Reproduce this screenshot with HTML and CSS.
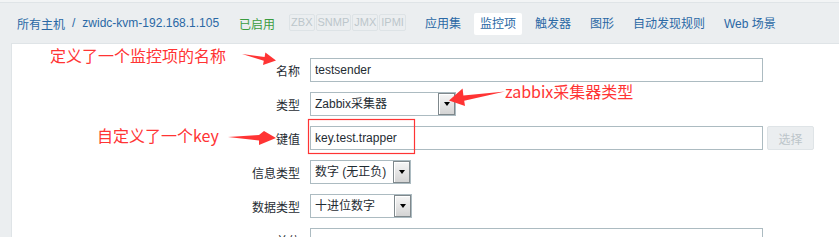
FILE: index.html
```html
<!DOCTYPE html>
<html lang="zh-CN">
<head>
<meta charset="utf-8">
<title>监控项</title>
<link rel="stylesheet" href="styles.css">
</head>
<body>
<div class="topbar"></div>
<header class="header">
  <nav class="crumbs">
    <a class="link">所有主机</a><span class="sep">/</span><a class="link">zwidc-kvm-192.168.1.105</a>
  </nav>
  <span class="status">已启用</span>
  <div class="tags">
    <span class="tag">ZBX</span><span class="tag">SNMP</span><span class="tag">JMX</span><span class="tag">IPMI</span>
  </div>
  <ul class="tabs">
    <li class="tab">应用集</li>
    <li class="tab active">监控项</li>
    <li class="tab">触发器</li>
    <li class="tab">图形</li>
    <li class="tab">自动发现规则</li>
    <li class="tab">Web 场景</li>
  </ul>
</header>
<main class="panel">
  <div class="form">
    <label class="lbl">名称</label>
    <div class="ctl"><input class="text" type="text" value="testsender"></div>

    <label class="lbl">类型</label>
    <div class="ctl"><div class="select w-type"><span class="val">Zabbix采集器</span><span class="arrow"></span></div></div>

    <label class="lbl">键值</label>
    <div class="ctl"><input class="text" type="text" value="key.test.trapper"><button class="btn" type="button">选择</button></div>

    <label class="lbl">信息类型</label>
    <div class="ctl"><div class="select w-info"><span class="val">数字 (无正负)</span><span class="arrow"></span></div></div>

    <label class="lbl">数据类型</label>
    <div class="ctl"><div class="select w-data"><span class="val">十进位数字</span><span class="arrow"></span></div></div>

    <label class="lbl">单位</label>
    <div class="ctl"><input class="text" type="text" value=""></div>
  </div>
</main>

<svg class="marks" width="839" height="237" viewBox="0 0 839 237">
  <rect x="308.5" y="119.5" width="106" height="34" fill="none" stroke="#ff3434" stroke-width="1.2"/>
  <polygon fill="#ff3434" points="242,54 264.6,57 265.4,52.5 276,60.5 263,65 263.8,60.8"/>
  <polygon fill="#ff3434" points="505,91.5 463.4,95.5 462.6,88.5 449,100.5 465,106 464.2,100.7"/>
  <polygon fill="#ff3434" points="228,137 259,135 264,131 276,138 259,145 259,140.5"/>
</svg>
<div class="note note-name">定义了一个监控项的名称</div>
<div class="note note-type">zabbix采集器类型</div>
<div class="note note-key">自定义了一个key</div>
</body>
</html>
```
FILE: styles.css
```css
html, body {
  margin: 0;
  padding: 0;
}
body {
  width: 839px;
  height: 237px;
  overflow: hidden;
  position: relative;
  background: #ebeef0;
  color: #1f2c33;
  font: 12px "Liberation Sans", Arial, "Noto Sans CJK SC", sans-serif;
}
.topbar {
  height: 2px;
  background: #f2f4f5;
  border-bottom: 1px solid #dfe4e7;
}
.header {
  display: flex;
  align-items: center;
  height: 40px;
  padding-left: 17px;
}
.crumbs {
  display: flex;
  align-items: center;
}
.link {
  color: #2a68a5;
}
.sep {
  color: #2a68a5;
  margin: 0 7px;
}
.status {
  color: #3a9c3f;
  margin-left: 20px;
}
.tags {
  display: flex;
  gap: 1px;
  margin-left: 14px;
  margin-top: -2px;
}
.tag {
  box-sizing: border-box;
  height: 17px;
  line-height: 15px;
  padding: 0 1px;
  border: 1px solid #dde3e6;
  border-radius: 2px;
  color: #bcc6cb;
  font-size: 11px;
}
.tabs {
  display: flex;
  list-style: none;
  margin: 2px 0 0 13px;
  padding: 0;
  gap: 7px;
}
.tab {
  height: 22px;
  line-height: 22px;
  padding: 0 6px;
  color: #2a68a5;
}
.tab.active {
  background: #fff;
  border-radius: 2px;
}
.panel {
  margin-left: 11px;
  background: #fff;
  border-left: 1px solid #dfe4e7;
  border-top: 1px solid #dfe4e7;
  height: 180px;
  padding-top: 14px;
  overflow: hidden;
}
.form {
  display: grid;
  grid-template-columns: 288px auto;
  grid-auto-rows: 24px;
  column-gap: 10px;
  row-gap: 10px;
  align-items: center;
}
.lbl {
  justify-self: end;
  white-space: nowrap;
}
.ctl {
  display: flex;
  align-items: center;
  gap: 4px;
}
.text {
  box-sizing: border-box;
  width: 453px;
  height: 24px;
  margin: 0;
  padding: 0 4px;
  border: 1px solid #acbbc1;
  border-radius: 0;
  font: inherit;
  color: #1f2c33;
  background: #fff;
  outline: none;
}
.btn {
  box-sizing: border-box;
  width: 47px;
  height: 24px;
  padding: 0;
  border: 1px solid #dfe4e7;
  border-radius: 2px;
  background: #ebeef0;
  color: #bcc5ca;
  font: inherit;
}
.select {
  box-sizing: border-box;
  display: flex;
  height: 24px;
  border: 1px solid #acbbc1;
  background: #fff;
}
.w-type { width: 146px; }
.w-info { width: 101px; }
.w-data { width: 102px; }
.val {
  flex: 1;
  padding-left: 4px;
  line-height: 22px;
  white-space: nowrap;
  overflow: hidden;
}
.arrow {
  box-sizing: border-box;
  width: 17px;
  display: flex;
  align-items: center;
  justify-content: center;
  border: 1px solid #7f888c;
  box-shadow: inset 1px 1px #fff;
  background: linear-gradient(#f6f6f6, #d4d4d4);
}
.arrow::after {
  content: "";
  border-left: 3.5px solid transparent;
  border-right: 3.5px solid transparent;
  border-top: 4px solid #000;
}
.marks {
  position: absolute;
  left: 0;
  top: 0;
  pointer-events: none;
}
.note {
  position: absolute;
  color: #ff3434;
  font: 16px/16px "Noto Sans CJK SC", "Liberation Sans", sans-serif;
  white-space: nowrap;
}
.note-name { left: 50px; top: 47px; }
.note-type { left: 505px; top: 83px; }
.note-key { left: 97px; top: 127px; }
```
